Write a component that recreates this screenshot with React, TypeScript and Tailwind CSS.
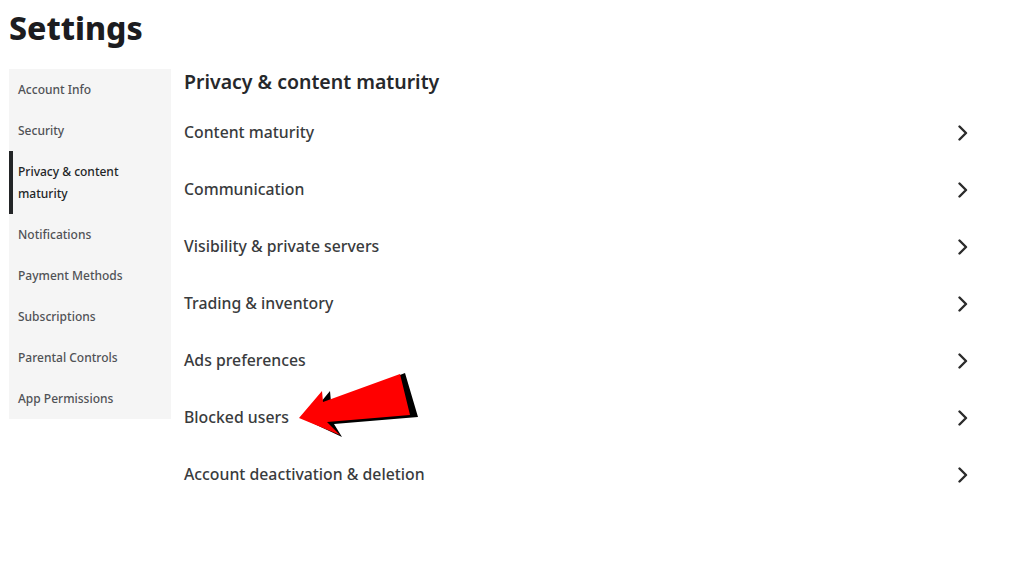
const sideItems = [
  { label: "Account Info" },
  { label: "Security" },
  { label: "Privacy & content maturity", active: true },
  { label: "Notifications" },
  { label: "Payment Methods" },
  { label: "Subscriptions" },
  { label: "Parental Controls" },
  { label: "App Permissions" },
];

const rows = [
  "Content maturity",
  "Communication",
  "Visibility & private servers",
  "Trading & inventory",
  "Ads preferences",
  "Blocked users",
  "Account deactivation & deletion",
];

function Chevron() {
  return (
    <svg width="12" height="16" viewBox="0 0 12 16" fill="none">
      <path d="M2.5 1.5 L9 8 L2.5 14.5" stroke="#2b2b2b" strokeWidth="2.4" strokeLinecap="round" strokeLinejoin="round" />
    </svg>
  );
}

function Arrow() {
  return (
    <svg
      className="absolute left-[290px] top-[365px] pointer-events-none"
      width="140"
      height="75"
      viewBox="290 365 140 75"
    >
      <polygon
        points="306,420 330,391 331,402 405,373 418,417 334,424 342,437"
        fill="#000"
      />
      <polygon
        points="299,418 322,391 323,402 400,374 410,415 327,422 340,435"
        fill="#ff0000"
      />
    </svg>
  );
}

export default function App() {
  return (
    <div
      className="relative w-[1024px] h-[576px] bg-white overflow-hidden pl-[9px]"
      style={{ fontFamily: '"Noto Sans", "Open Sans", sans-serif' }}
    >
      <h1 className="pt-[10px] text-[32px] leading-[36px] font-extrabold text-[#1c1c20]">Settings</h1>
      <div className="mt-[23px] flex items-start">
        <nav className="w-[162px] bg-[#f5f5f5] flex flex-col">
          {sideItems.map((it) => (
            <div
              key={it.label}
              className={
                it.active
                  ? "border-l-[4px] border-[#232527] pl-[5px] pr-4 py-[9.5px] text-[12px] leading-[22px] font-medium text-[#232527]"
                  : "border-l-[4px] border-transparent pl-[5px] pr-4 py-[9.5px] text-[12px] leading-[22px] font-medium text-[#505256]"
              }
            >
              {it.label}
            </div>
          ))}
        </nav>
        <main className="flex-1 pl-[13px] pr-[55px]">
          <h2 className="text-[19.5px] leading-[26px] font-semibold text-[#26282b] mb-[9.5px]">
            Privacy &amp; content maturity
          </h2>
          {rows.map((r) => (
            <div key={r} className="h-[57px] flex items-center justify-between text-[15.8px] font-medium text-[#393b3d]">
              <span>{r}</span>
              <Chevron />
            </div>
          ))}
        </main>
      </div>
      <Arrow />
    </div>
  );
}
